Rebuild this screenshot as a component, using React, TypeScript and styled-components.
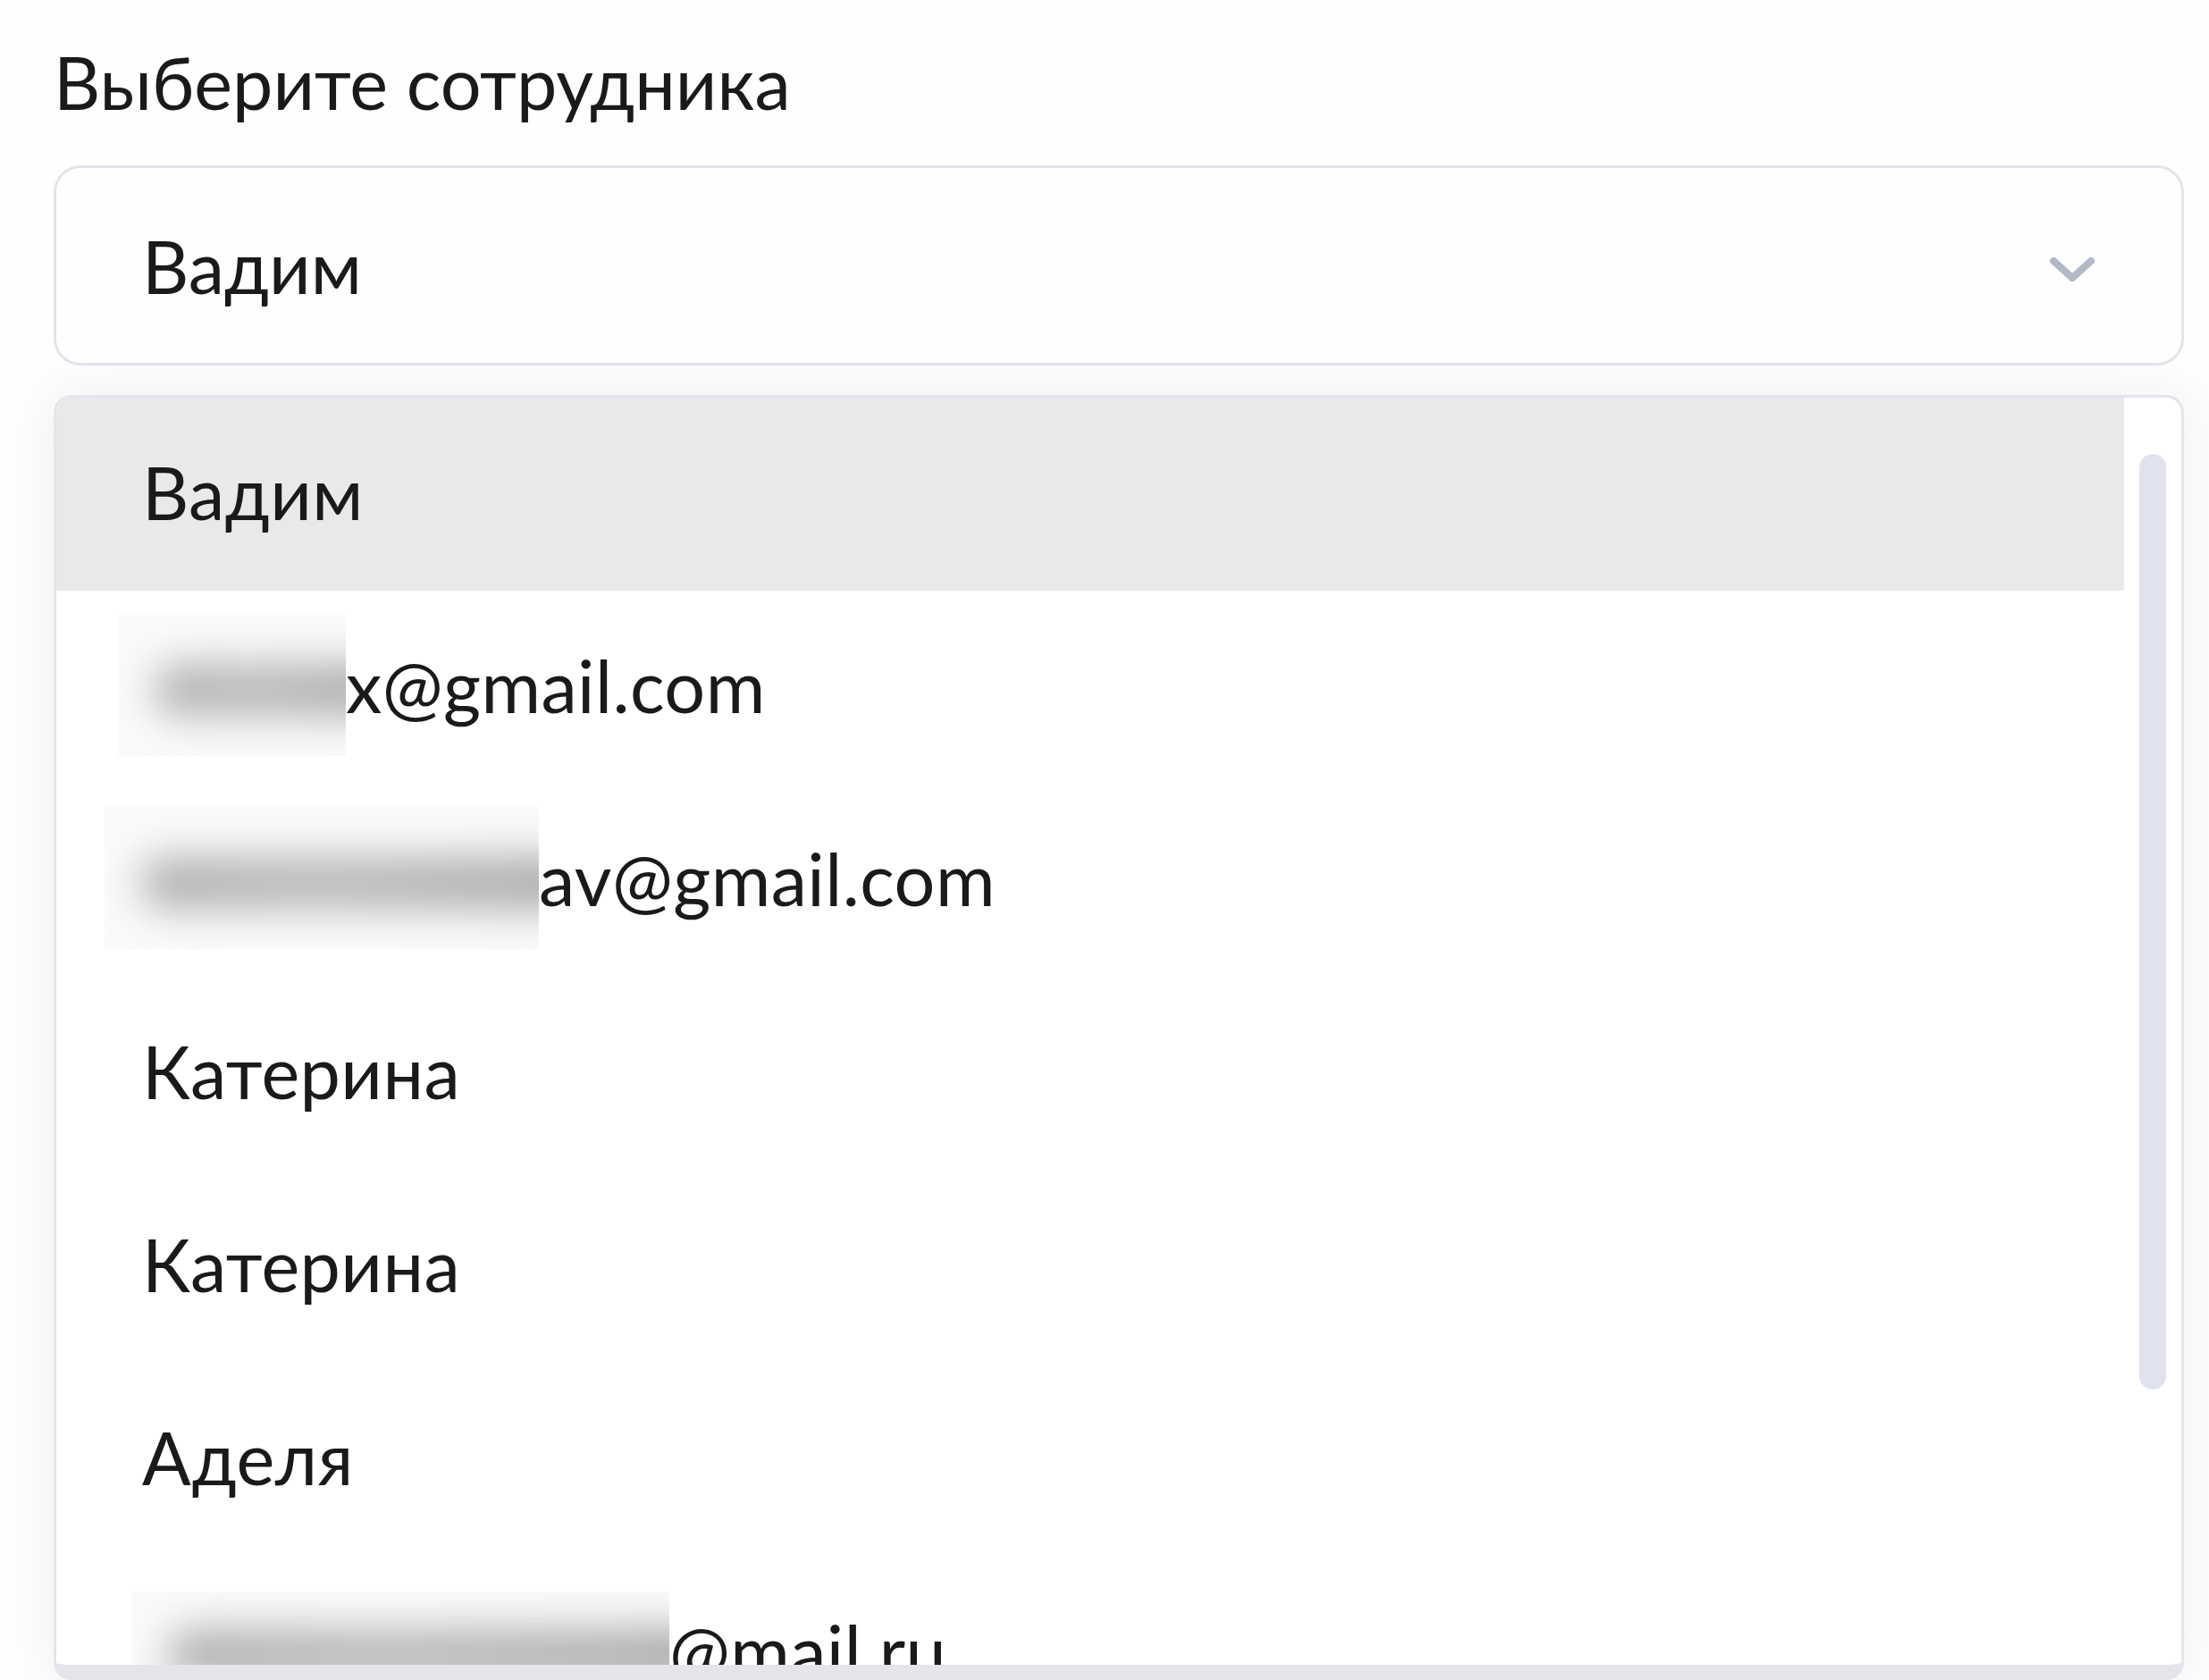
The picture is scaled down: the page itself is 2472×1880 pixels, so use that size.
import styled, { createGlobalStyle } from 'styled-components';

const GlobalStyle = createGlobalStyle`
  html, body {
    margin: 0;
    padding: 0;
    background: #fefefe;
  }
  * {
    box-sizing: border-box;
  }
`;

const Page = styled.div`
  width: 2472px;
  height: 1880px;
  overflow: hidden;
  padding: 51px 28px 0 60px;
  font-family: 'Lato', 'Open Sans', sans-serif;
  color: #1a1a1a;
`;

const Label = styled.div`
  font-size: 81px;
  line-height: 81px;
  margin-bottom: 53px;
`;

const SelectBox = styled.div`
  display: flex;
  align-items: center;
  justify-content: space-between;
  height: 224px;
  padding: 0 96px 0 96px;
  border: 3px solid #e3e5ec;
  border-radius: 30px;
  background: #fefefe;
  font-size: 81px;
  line-height: 1;
`;

const Chevron = styled.svg`
  width: 52px;
  height: 30px;
  margin-top: 10px;
`;

const Dropdown = styled.div`
  display: flex;
  height: 1438px;
  margin-top: 33px;
  border: 3px solid #e3e5ec;
  border-bottom: 17px solid #e4e4ea;
  border-radius: 20px;
  overflow: hidden;
  background: #fff;
  box-shadow: 0 0 60px rgba(40, 40, 60, 0.07);
`;

const Options = styled.div`
  flex: 1;
  display: flex;
  flex-direction: column;
`;

const Option = styled.div<{ $active?: boolean }>`
  flex: none;
  display: flex;
  align-items: center;
  height: 216px;
  padding: 0 0 6px 96px;
  font-size: 81px;
  letter-spacing: 0.4px;
  white-space: nowrap;
  background: ${p => (p.$active ? '#e9e9e9' : '#fff')};
`;

// redacted part of an address: a clipped, blurred grey smear
const Redacted = styled.span<{ $w: number; $h: number; $shift: number }>`
  display: flex;
  align-items: center;
  flex: none;
  width: ${p => p.$w}px;
  height: ${p => p.$h}px;
  margin-left: ${p => p.$shift}px;
  padding: 12px 0 0 40px;
  overflow: hidden;
  background: #fafafa;
`;

const Smear = styled.span`
  flex: 1;
  height: 60px;
  margin-right: -50px;
  border-radius: 30px;
  background: linear-gradient(90deg, #b2b2b2, #bababa 40%, #b0b0b0 85%, #a8a8a8);
  filter: blur(22px);
`;

const Track = styled.div`
  width: 64px;
  padding-top: 63px;
  display: flex;
  justify-content: center;
`;

const Thumb = styled.div`
  width: 30px;
  height: 1047px;
  border-radius: 15px;
  background: #e0e3ed;
`;

type Item = { text: string; hidden?: { w: number; h: number; shift: number } };

const items: Item[] = [
  { text: 'Вадим' },
  { text: 'x@gmail.com', hidden: { w: 255, h: 160, shift: -27 } },
  { text: 'av@gmail.com', hidden: { w: 486, h: 160, shift: -42 } },
  { text: 'Катерина' },
  { text: 'Катерина' },
  { text: 'Аделя' },
  { text: '@mail.ru', hidden: { w: 602, h: 130, shift: -12 } },
];

const App = () => {
  return (
    <>
      <GlobalStyle />
      <Page>
        <Label>Выберите сотрудника</Label>
        <SelectBox>
          <span>Вадим</span>
          <Chevron viewBox="0 0 52 30" fill="none">
            <path d="M5 5 L26 24 L47 5" stroke="#b3b8c6" strokeWidth="8" strokeLinecap="round" strokeLinejoin="round" />
          </Chevron>
        </SelectBox>
        <Dropdown>
          <Options>
            {items.map((item, i) => (
              <Option key={i} $active={i === 0}>
                {item.hidden && (
                  <Redacted $w={item.hidden.w} $h={item.hidden.h} $shift={item.hidden.shift}>
                    <Smear />
                  </Redacted>
                )}
                {item.text}
              </Option>
            ))}
          </Options>
          <Track>
            <Thumb />
          </Track>
        </Dropdown>
      </Page>
    </>
  );
};

export default App;
